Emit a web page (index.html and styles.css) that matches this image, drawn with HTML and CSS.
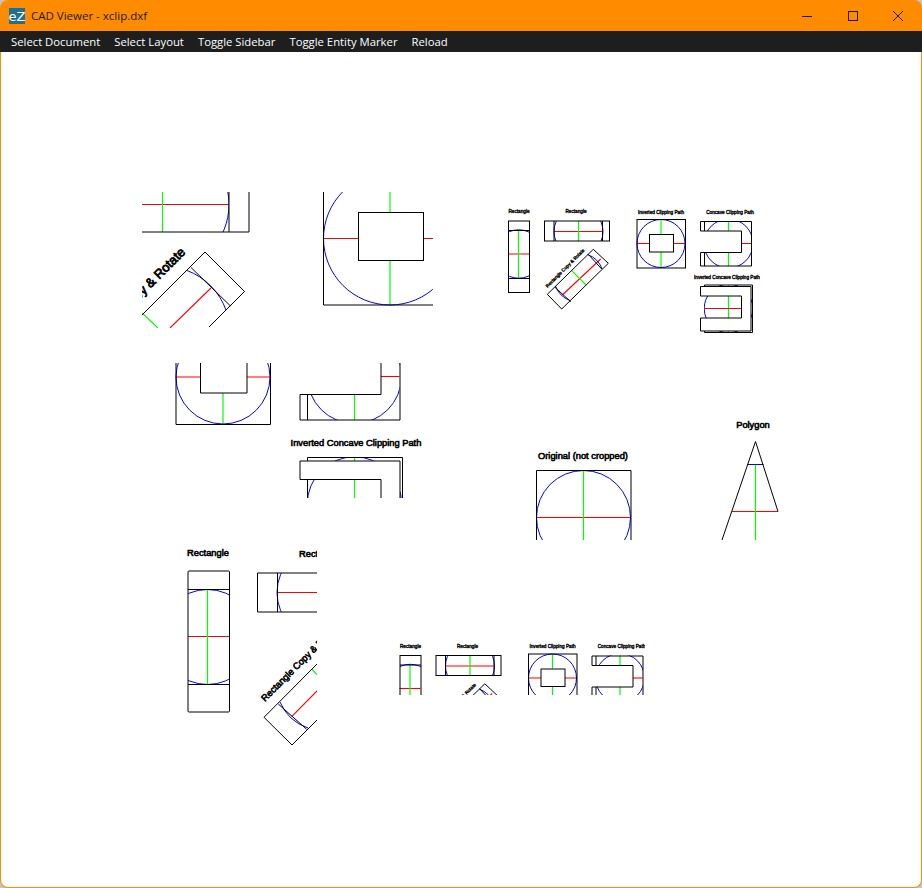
FILE: index.html
```html
<!DOCTYPE html>
<html lang="en">
<head>
    <meta charset="UTF-8">
    <title>CAD Viewer - xclip.dxf</title>
    <link rel="stylesheet" href="styles.css">
</head>
<body>
<div class="window">
    <header class="titlebar">
        <svg class="app-icon" width="16" height="16" viewBox="0 0 16 16">
            <rect width="16" height="16" fill="#1d6f94"/>
            <text x="8" y="13" text-anchor="middle" class="app-icon-text">eZ</text>
        </svg>
        <span class="title">CAD Viewer - xclip.dxf</span>
        <div class="controls">
            <button class="control"><svg width="10" height="10" viewBox="0 0 10 10"><path d="M0 5.500H10"/></svg></button>
            <button class="control"><svg width="10" height="10" viewBox="0 0 10 10"><rect x=".5" y=".5" width="9" height="9"/></svg></button>
            <button class="control"><svg width="10" height="10" viewBox="0 0 10 10"><path d="M0 0L10 10M10 0L0 10"/></svg></button>
        </div>
    </header>
    <nav class="menu">
        <a class="menu-item">Select Document</a>
        <a class="menu-item">Select Layout</a>
        <a class="menu-item">Toggle Sidebar</a>
        <a class="menu-item">Toggle Entity Marker</a>
        <a class="menu-item">Reload</a>
    </nav>
    <main class="canvas">
        <svg class="drawing" width="920" height="835" viewBox="1 52 920 835">
            <!-- top left viewport -->
            <svg x="142" y="192" width="108" height="136" viewBox="142 192 108 136">
                <path class="red" d="M142 204.500H229M211 288L170 328"/>
                <path class="green" d="M162.500 192V232M142 313L158 328"/>
                <svg x="142" y="192" width="87" height="40" viewBox="142 192 87 40">
                    <circle class="blue" cx="162.500" cy="204.500" r="66.500"/>
                </svg>
                <path class="blue" d="M187 270.500A66.500 66.500 0 0 1 226 310"/>
                <path class="line" d="M142 232H249V192M229 192V232"/>
                <path class="line" d="M142 315L205 252L244.500 291.500L209 327M191 267.500L230.500 306"/>
                <text class="label label-l" transform="translate(186 253) rotate(-45)" text-anchor="end">Rectangle Copy &amp; Rotate</text>
            </svg>
            <!-- inverted clipping path, zoomed -->
            <svg x="323" y="192" width="110" height="114" viewBox="323 192 110 114">
                <path class="red" d="M324 238.500H358M423.500 238.500H433"/>
                <path class="green" d="M390 192V212M390 260V305"/>
                <circle class="blue" cx="390" cy="238.500" r="66.500"/>
                <path class="line" d="M323.500 192V305H433"/>
                <rect class="line fill" x="358.500" y="212.500" width="65" height="48"/>
            </svg>
            <!-- all clipping variants, small -->
            <svg x="500" y="205" width="260" height="130" viewBox="500 205 260 130">
                <g id="small-set">
                    <text class="label label-s" x="519" y="213" text-anchor="middle">Rectangle</text>
                    <path class="red" d="M508 254H529"/>
                    <path class="green" d="M518.500 230V278"/>
                    <svg x="508.500" y="221" width="21" height="71" viewBox="508.500 221 21 71">
                        <circle class="blue" cx="518.700" cy="254" r="24.200"/>
                    </svg>
                    <rect class="line" x="508.500" y="221" width="21" height="71.500"/>
                    <path class="line" d="M508.500 230.500H529.500M508.500 278.500H529.500"/>

                    <text class="label label-s" x="576" y="213" text-anchor="middle">Rectangle</text>
                    <path class="red" d="M554 231.500H602"/>
                    <path class="green" d="M578.500 221V241"/>
                    <svg x="544.500" y="221" width="65" height="20" viewBox="544.500 221 65 20">
                        <circle class="blue" cx="578.500" cy="231.500" r="24.500"/>
                    </svg>
                    <rect class="line" x="544.500" y="221" width="65" height="20"/>
                    <path class="line" d="M554 221V241M602.500 221V241"/>

                    <text class="label label-s" transform="translate(547.500 288) rotate(-45)">Rectangle Copy &amp; Rotate</text>
                    <path class="red" d="M562.300 295L600.700 259"/>
                    <path class="green" d="M571.700 270.700L586 285"/>
                    <path class="blue" d="M555.500 286A24.500 24.500 0 0 0 570 300.500M587.600 254.500A24.500 24.500 0 0 1 602.100 269"/>
                    <path class="line" d="M547.300 294.300L593.300 249.300L608.300 263.300L561.700 309ZM555 287.300L570.700 301.700M588.300 254.300L601.700 269"/>

                    <text class="label label-s" x="661" y="213.500" text-anchor="middle">Inverted Clipping Path</text>
                    <path class="red" d="M637 243.500H650M673 243.500H685"/>
                    <path class="green" d="M661 220V234M661 252V268"/>
                    <circle class="blue" cx="661" cy="243.500" r="24"/>
                    <rect class="line" x="637" y="219.500" width="48.500" height="48.500"/>
                    <rect class="line fill" x="649.500" y="234.500" width="24" height="17.500"/>

                    <text class="label label-s" x="730" y="213.500" text-anchor="middle">Concave Clipping Path</text>
                    <svg x="700" y="221" width="51.500" height="45" viewBox="700 221 51.500 45">
                        <circle class="blue" cx="728.500" cy="243.500" r="24.500"/>
                    </svg>
                    <rect class="fill" x="700" y="231" width="41.500" height="21"/>
                    <path class="red" d="M741.500 243.500H751"/>
                    <path class="green" d="M728.500 221V231M728.500 252.500V266"/>
                    <path class="line" d="M700.500 221.500H751.500V266H700.500V252.500H741.500V231H700.500ZM704.500 221.500V231M704.500 252.500V266"/>

                    <text class="label label-s" x="727" y="278.500" text-anchor="middle">Inverted Concave Clipping Path</text>
                    <svg x="704" y="285" width="49" height="48" viewBox="704 285 49 48">
                        <circle class="blue" cx="728.500" cy="308.500" r="24.300"/>
                        <path class="green" d="M728.500 285V333"/>
                        <path class="red" d="M704 308.500H742"/>
                    </svg>
                    <path class="line fill" d="M700.500 296V286.500H751V331H700.500V318H741.500V296Z"/>
                    <path class="line" d="M704.500 286.500V285H752.500V332.500H704.500V331"/>
                </g>
            </svg>
            <!-- same drawing, bottom viewport -->
            <svg x="395" y="640" width="250" height="55" viewBox="395 640 250 55">
                <use href="#small-set" transform="translate(-108.500 434.500)"/>
            </svg>
            <!-- inverted clipping path, second zoom -->
            <svg x="175" y="363" width="97" height="62" viewBox="175 363 97 62">
                <path class="red" d="M176 377H200M247 377H270"/>
                <path class="green" d="M223 393V424"/>
                <circle class="blue" cx="223" cy="377" r="47"/>
                <path class="line" d="M176 363V424.500H270.500V363"/>
                <path class="line" d="M200.500 363V393H247V363"/>
            </svg>
            <!-- concave variants, second zoom -->
            <svg x="285" y="363" width="140" height="135" viewBox="285 363 140 135">
                <svg x="300" y="363" width="99.500" height="57" viewBox="300 363 99.500 57">
                    <circle class="blue" cx="354.500" cy="376.500" r="47"/>
                </svg>
                <rect class="fill" x="299" y="363" width="81.500" height="31"/>
                <path class="red" d="M381 376.500H399.500"/>
                <path class="green" d="M354.500 394.500V420"/>
                <path class="line" d="M300 394.500H381V363M300 394.500V420H400V363M307.500 394.500V420"/>
                <text class="label label-m" x="356" y="446" text-anchor="middle">Inverted Concave Clipping Path</text>
                <svg x="307.500" y="457" width="95" height="41" viewBox="307.500 457 95 41">
                    <circle class="blue" cx="354.500" cy="504" r="47.200"/>
                </svg>
                <path class="green" d="M354.500 457V498"/>
                <path class="line fill" d="M300 479.500V461H400V510H381V479.500Z"/>
                <path class="line" d="M307.500 461V457.500H402.500V498M307.500 479.500V498"/>
            </svg>
            <!-- original and polygon -->
            <svg x="530" y="415" width="255" height="125" viewBox="530 415 255 125">
                <text class="label label-m" x="583" y="459" text-anchor="middle">Original (not cropped)</text>
                <path class="red" d="M537 517.500H631"/>
                <path class="green" d="M583.500 470V540"/>
                <circle class="blue" cx="583.500" cy="517.500" r="47"/>
                <path class="line" d="M536.500 540V470.500H631V540"/>
                <text class="label label-m" x="753" y="428" text-anchor="middle">Polygon</text>
                <path class="red" d="M732 511.500H778"/>
                <path class="green" d="M755.500 465V540"/>
                <path class="blue" d="M747.500 464.500H763.500"/>
                <path class="line" d="M722 540L755.500 441.500L778 511.500"/>
            </svg>
            <!-- rectangles, second zoom -->
            <svg x="180" y="545" width="137" height="205" viewBox="180 545 137 205">
                <text class="label label-m" x="208" y="556" text-anchor="middle">Rectangle</text>
                <path class="red" d="M188 636.500H229"/>
                <path class="green" d="M207.500 590V684"/>
                <svg x="188" y="571" width="41.500" height="141" viewBox="188 571 41.500 141">
                    <circle class="blue" cx="207.500" cy="637" r="47.500"/>
                </svg>
                <rect class="line" x="188" y="571" width="41.500" height="141" rx="1"/>
                <path class="line" d="M188 589.500H229.500M188 684.500H229.500"/>
                <text class="label label-m" x="299" y="557">Rectangle</text>
                <path class="red" d="M277.500 592.500H317"/>
                <svg x="257" y="573" width="60" height="39" viewBox="257 573 60 39">
                    <circle class="blue" cx="324" cy="592.500" r="47"/>
                </svg>
                <path class="line" d="M317 573H257.500V612H317M277.500 573V612"/>
                <text class="label label-m" transform="translate(265 702) rotate(-45)">Rectangle Copy &amp; Rotate</text>
                <path class="red" d="M291.700 716.700L317 691"/>
                <path class="green" d="M311.700 669L317 674.500"/>
                <path class="blue" d="M280 702A47 47 0 0 0 308 728"/>
                <path class="line" d="M317 664L264 717.300L292 745L317 720M278.300 704L306.700 729.300"/>
            </svg>
        </svg>
    </main>
</div>
</body>
</html>
```

FILE: styles.css
```css
html, body {
    margin: 0;
    height: 100%;
    background: #c4c4c4;
}
.window {
    display: flex;
    flex-direction: column;
    box-sizing: border-box;
    height: 888px;
    overflow: hidden;
    border-radius: 8px;
    background: #ff8c00;
}
.titlebar {
    display: flex;
    align-items: center;
    height: 31px;
    padding-left: 9px;
    color: #1a1a1a;
    font-family: "Open Sans", sans-serif;
    font-size: 11.500px;
}
.app-icon {
    margin-right: 6px;
}
.app-icon-text {
    fill: #fff;
    font-family: "DejaVu Sans", sans-serif;
    font-size: 13px;
}
.controls {
    display: flex;
    margin-left: auto;
    padding-right: 1px;
}
.control {
    display: flex;
    align-items: center;
    justify-content: center;
    width: 45.500px;
    height: 31px;
    padding: 0;
    border: none;
    background: none;
}
.control svg {
    fill: none;
    stroke: #1a1a1a;
    stroke-width: 1;
}
.menu {
    display: flex;
    height: 21px;
    padding-left: 4px;
    align-items: center;
    background: #1e1e1e;
    color: #fff;
    font-family: "Open Sans", sans-serif;
    font-size: 11.300px;
}
.menu-item {
    padding: 0 7px;
}
.canvas {
    flex: 1;
    margin: 0 1px 1px;
    background: #fff;
    border-radius: 0 0 7px 7px;
    overflow: hidden;
}
.drawing {
    display: block;
}
.line {
    fill: none;
    stroke: #000;
    stroke-width: 1;
}
.red, .green, .blue {
    fill: none;
}
.red {
    stroke: #f00;
    stroke-width: 1.100;
}
.green {
    stroke: #0f0;
    stroke-width: 1.200;
}
.blue {
    stroke: #00f;
    stroke-width: 1;
}
.fill {
    fill: #fff;
}
.label {
    font-family: "Liberation Sans", sans-serif;
    fill: #000;
    stroke: #000;
}
.label-s {
    font-size: 4.700px;
    stroke-width: .35;
}
.label-m {
    font-size: 9.300px;
    stroke-width: .6;
}
.label-l {
    font-size: 12.900px;
    stroke-width: .8;
}
```
